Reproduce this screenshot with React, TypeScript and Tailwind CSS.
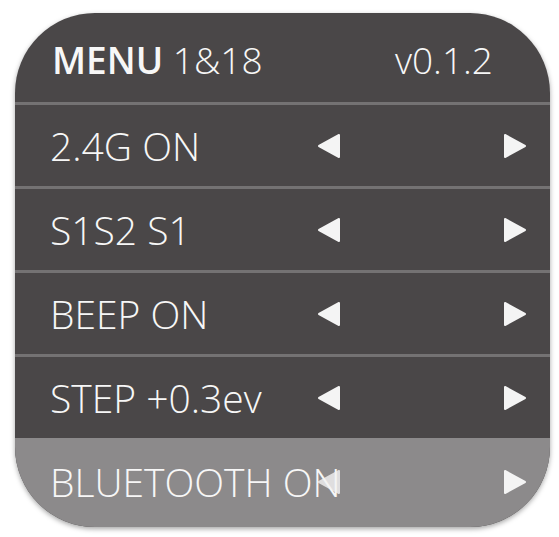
import React from "react";

type Row = { label: string; active?: boolean };

const rows: Row[] = [
  { label: "2.4G ON" },
  { label: "S1S2 S1" },
  { label: "BEEP ON" },
  { label: "STEP +0.3ev" },
];

function ArrowLeft({ faint }: { faint?: boolean }) {
  return (
    <svg width="24" height="26" viewBox="0 0 24 26" className={faint ? "opacity-80" : ""}>
      <polygon points="22,2 22,24 2,13" fill="#f4f4f4" stroke="#f4f4f4" strokeWidth="2" strokeLinejoin="round" />
    </svg>
  );
}

function ArrowRight() {
  return (
    <svg width="24" height="26" viewBox="0 0 24 26">
      <polygon points="2,2 2,24 22,13" fill="#f4f4f4" stroke="#f4f4f4" strokeWidth="2" strokeLinejoin="round" />
    </svg>
  );
}

function MenuRow({ label, active }: Row) {
  return (
    <div
      className={
        active
          ? "grid grid-cols-[267px_186px_24px] items-center pl-[35px] h-[89px] pb-[2px] bg-[#8c8a8b]"
          : "grid grid-cols-[267px_186px_24px] items-center pl-[35px] h-[84px] border-t-[3px] border-[#747273]"
      }
    >
      <span className="whitespace-nowrap text-[39px] font-light leading-none text-[#f7f7f7]">
        {label}
      </span>
      <ArrowLeft faint={active} />
      <ArrowRight />
    </div>
  );
}

export default function App() {
  return (
    <div
      className="w-[559px] h-[537px] bg-white pl-[15px] pt-[13px]"
      style={{ fontFamily: '"Open Sans", "Noto Sans", sans-serif' }}
    >
      <div className="w-[535px] h-[514px] rounded-[80px] overflow-hidden bg-[#4a4748] flex flex-col shadow-[0_2px_5px_rgba(0,0,0,0.35)]">
        <div className="h-[89px] flex items-center justify-between pl-[37px] pr-[57px] pt-[4px] text-[#f7f7f7] leading-none">
          <span className="text-[37px] whitespace-nowrap">
            <span className="font-semibold">MENU</span>{" "}
            <span className="font-light">1&amp;18</span>
          </span>
          <span className="text-[37px] font-light">v0.1.2</span>
        </div>
        {rows.map((r) => (
          <MenuRow key={r.label} label={r.label} />
        ))}
        <MenuRow label="BLUETOOTH ON" active />
      </div>
    </div>
  );
}
